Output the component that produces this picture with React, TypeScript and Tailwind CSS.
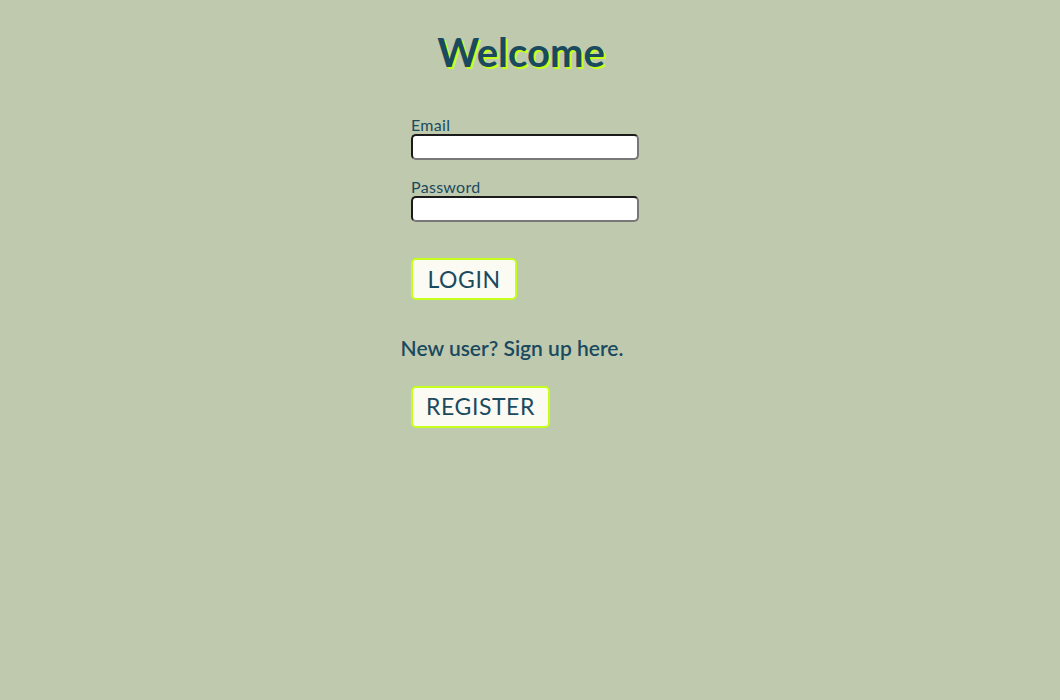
import { FC } from "react";

const App: FC = () => {
    return <div className="min-h-screen bg-[#bfc9ae] text-[#1a4a5f] font-['Lato',sans-serif]">
        <div className="flex flex-col items-center pt-[28px]">
            <h1 className="text-[40px] leading-[48px] font-bold [text-shadow:2px_2px_0_#c6ff1a] ml-[-18px]">Welcome</h1>
            <form className="w-[228px] mt-[40px] ml-[-10px] flex flex-col" onSubmit={(e) => e.preventDefault()}>
                <label className="text-[16px] leading-[18px] tracking-[0.3px]">Email</label>
                <input type="email" className="h-[26px] bg-white rounded-[5px] border-2 border-t-[#1b1b1b] border-l-[#1b1b1b] border-r-[#777] border-b-[#777] outline-none" />
                <label className="text-[16px] leading-[18px] tracking-[0.3px] mt-[18px]">Password</label>
                <input type="password" className="h-[26px] bg-white rounded-[5px] border-2 border-t-[#1b1b1b] border-l-[#1b1b1b] border-r-[#777] border-b-[#777] outline-none" />
                <div className="mt-[36px]">
                    <button type="submit" className="h-[42px] w-[106px] bg-[#fbfbf4] border-2 border-[#c6ff1a] rounded-[5px] text-[23px] tracking-wide">LOGIN</button>
                </div>
            </form>
            <p className="mt-[32px] ml-[-36px] text-[21px] font-semibold">New user? Sign up here.</p>
            <div className="w-[228px] ml-[-10px] mt-[22px]">
                <button className="h-[42px] w-[139px] bg-[#fbfbf4] border-2 border-[#c6ff1a] rounded-[5px] text-[23px] tracking-wide">REGISTER</button>
            </div>
        </div>
    </div>
}

export default App;
